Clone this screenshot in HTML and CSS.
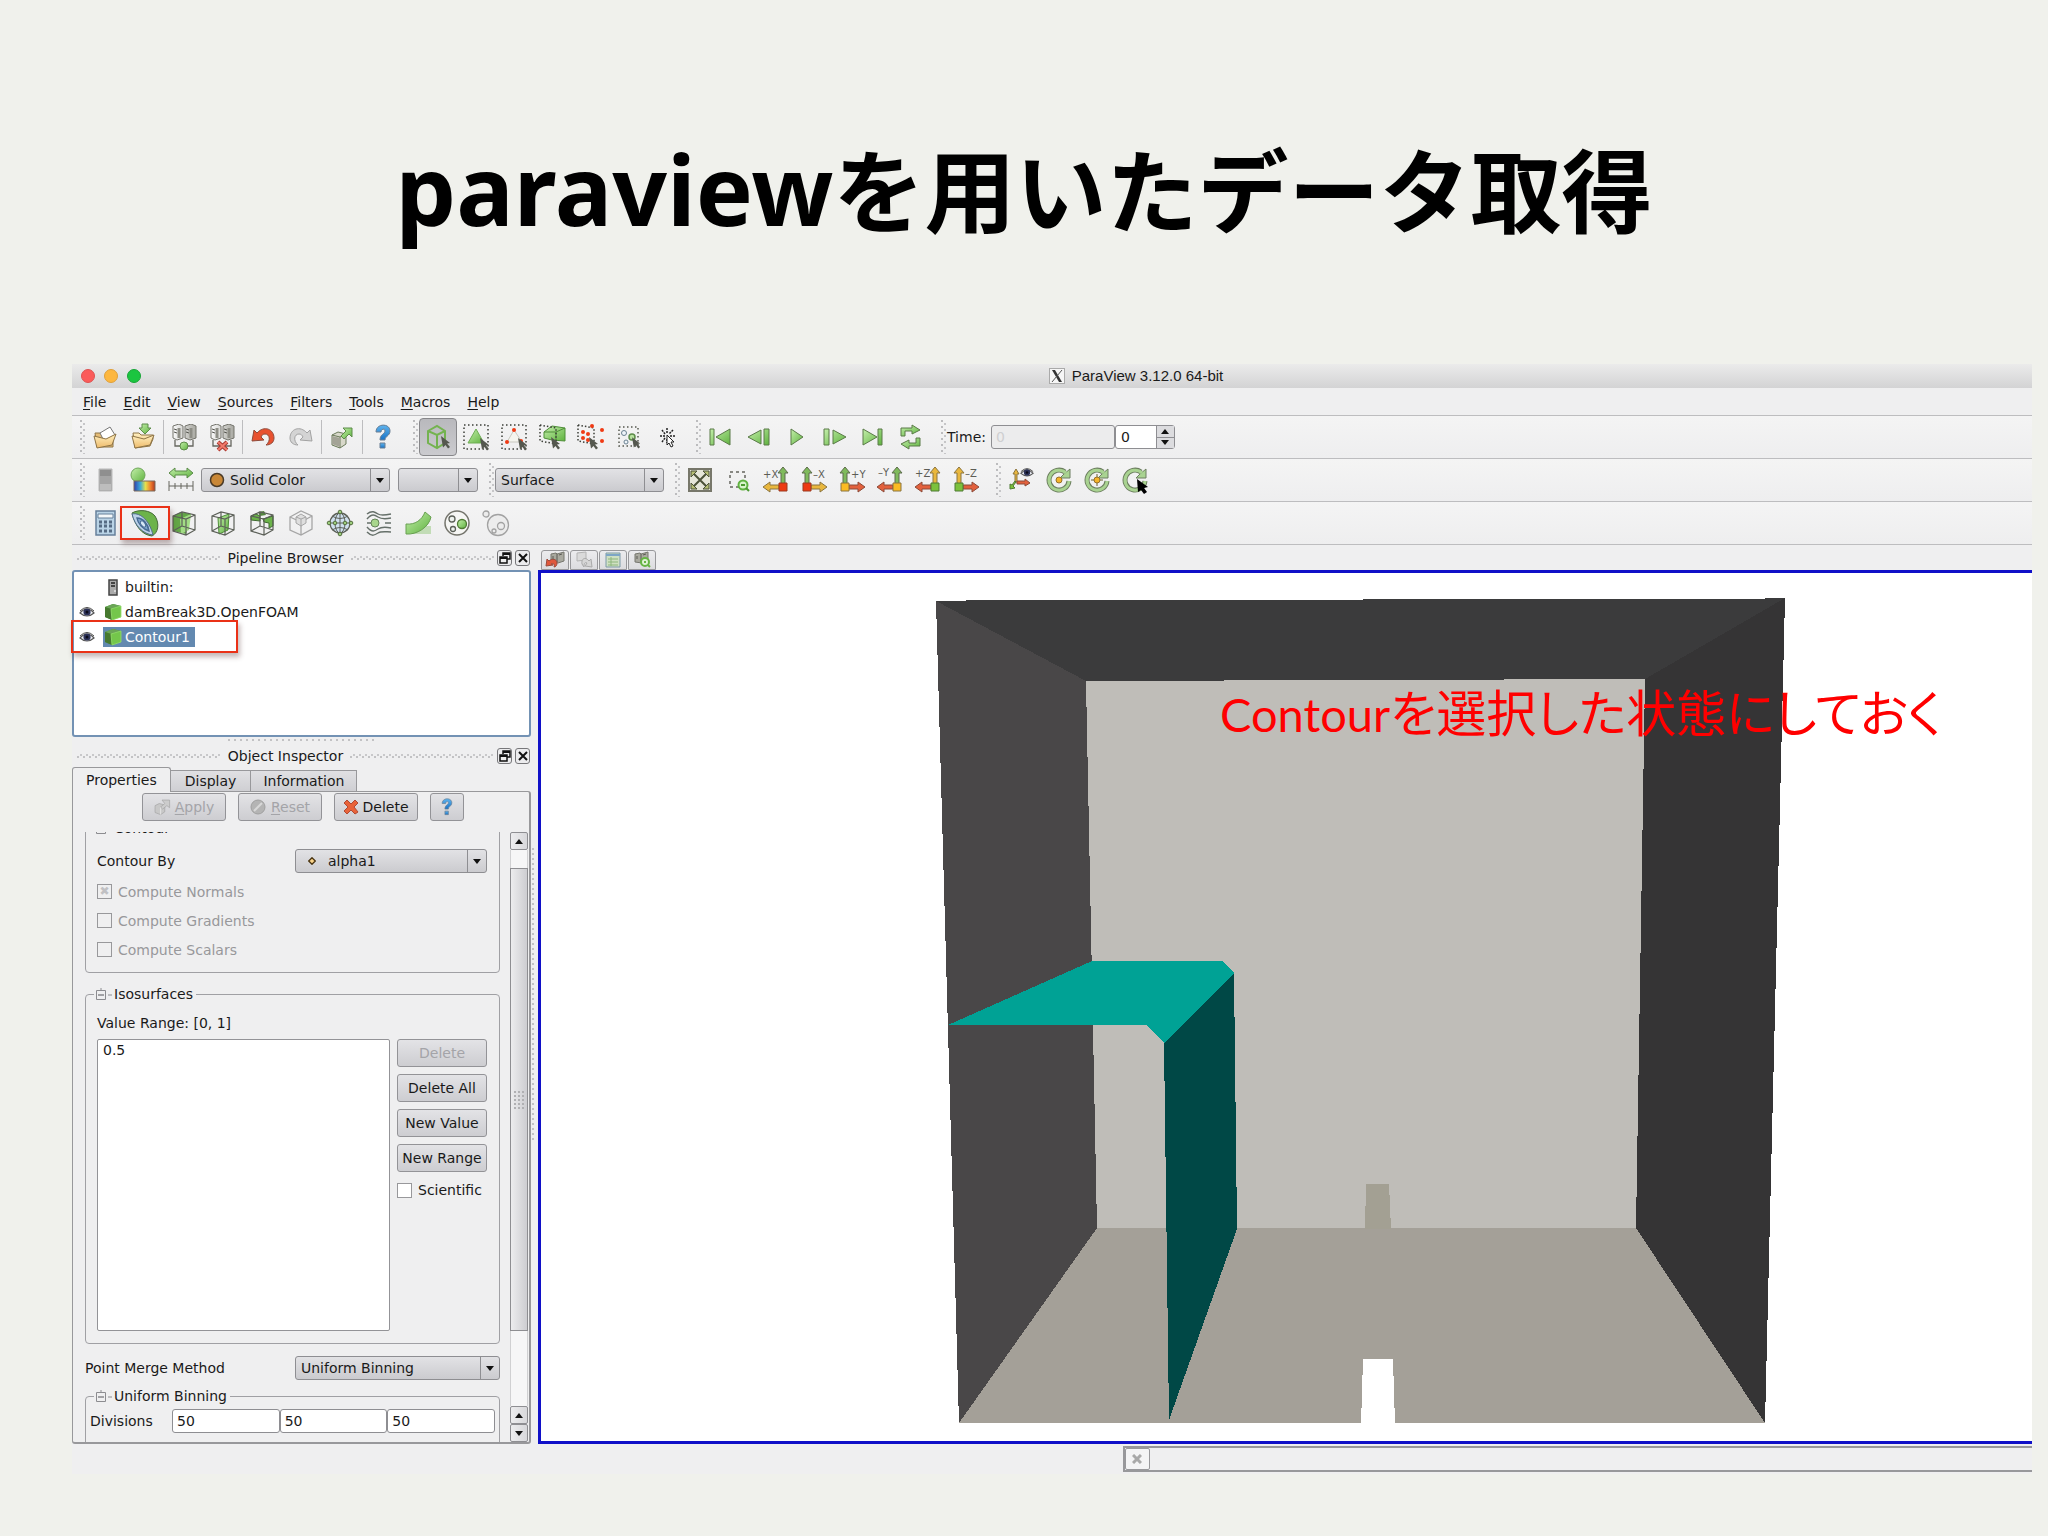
FILE: index.html
```html
<!DOCTYPE html>
<html lang="ja">

<head>
    <meta charset="UTF-8">
    <meta name="viewport" content="width=device-width, initial-scale=1.0">
    <title>paraviewを用いたデータ取得</title>
    <link rel="stylesheet" href="styles.css">
</head>

<body>
    <!-- Shared gradients and icon parts -->
    <svg class="defs" width="0" height="0" aria-hidden="true">
        <defs>
            <linearGradient id="green" x1="0" y1="0" x2="1" y2="1">
                <stop offset="0" stop-color="#c4efab" />
                <stop offset="1" stop-color="#5fb23f" />
            </linearGradient>
            <linearGradient id="folder" x1="0" y1="0" x2="0" y2="1">
                <stop offset="0" stop-color="#fff0c0" />
                <stop offset="1" stop-color="#eebb6c" />
            </linearGradient>
            <linearGradient id="steel" x1="0" y1="0" x2="1" y2="0">
                <stop offset="0" stop-color="#fafafa" />
                <stop offset="1" stop-color="#a9a9a2" />
            </linearGradient>
            <linearGradient id="rainbow" x1="0" y1="0" x2="1" y2="0">
                <stop offset="0" stop-color="#2f3fae" />
                <stop offset="0.3" stop-color="#3aa9d8" />
                <stop offset="0.55" stop-color="#e8e04a" />
                <stop offset="0.8" stop-color="#ee7a2c" />
                <stop offset="1" stop-color="#b03a20" />
            </linearGradient>
            <linearGradient id="blue" x1="0" y1="0" x2="0" y2="1">
                <stop offset="0" stop-color="#5fb4ee" />
                <stop offset="1" stop-color="#1a72c4" />
            </linearGradient>
        </defs>
        <symbol id="cursor" viewBox="0 0 10 13">
            <path d="M0 0L9 7L6 7.500L9 11L7 12.500L4.500 9L2 11.500Z" fill="#55584f" />
        </symbol>
        <symbol id="dots" viewBox="0 0 26 26">
            <path d="M1 1H25V25H1Z" fill="none" stroke="#3c3f38" stroke-width="1.500" stroke-dasharray="1.500 2.500" />
        </symbol>
        <symbol id="wirecube" viewBox="0 0 26 26">
            <path d="M2 6L11 2L24 5V20L15 25L2 21ZM2 6L15 9L24 5M15 9V25M11 2V16L2 21M11 16L24 20" fill="none"
                stroke="#5c6058" stroke-width="1.200" />
        </symbol>
        <symbol id="cubeblock" viewBox="0 0 18 18">
            <path d="M1 4L9 1L17 3V14L8 17L1 14Z" fill="#4f9a3b" />
            <path d="M1 4L9 1L17 3L7 6Z" fill="#6aa457" />
            <path d="M1 4L7 6L8 17L1 14Z" fill="#46792f" />
            <path d="M7 6L17 3V14L8 17Z" fill="#74c64b" stroke="#93dd6b" stroke-width="0.800" />
        </symbol>
        <symbol id="eye" viewBox="0 0 16 12">
            <path d="M1 7Q8 -1 15 7Q8 13 1 7Z" fill="#eef0f6" stroke="#555" stroke-width="1.200" />
            <circle cx="8" cy="6" r="3.600" fill="#2b3158" />
            <circle cx="8" cy="6" r="1.500" fill="#0a0a18" />
            <path d="M1 5Q8 -2 15 5" fill="none" stroke="#444" />
        </symbol>
        <symbol id="servers" viewBox="0 0 26 26">
            <path d="M2 2L8 0L12 2V14L6 16L2 14ZM14 2L20 0L25 2V14L19 16L14 14Z" fill="url(#steel)" stroke="#74746c" />
            <path d="M3 5L6 6M3 8L6 9M15 5L18 6M15 8L18 9" stroke="#55554f" />
            <path d="M8 4V14M20 4V14" stroke="#8e8e86" stroke-width="3" />
            <path d="M4 16V22H22V16" fill="none" stroke="#66665f" stroke-width="1.300" />
        </symbol>
        <symbol id="question" viewBox="0 0 18 26">
            <path d="M2 8C2 -1 16 -1 16 7C16 12 11 12 11 16H6C6 10 11 10 11 7C11 4 7 5 7 8Z" fill="url(#blue)"
                stroke="#6a7f94" />
            <path d="M6 19H11V24H6Z" fill="url(#blue)" stroke="#6a7f94" />
        </symbol>
        <symbol id="float" viewBox="0 0 12 12">
            <path d="M4 4V1H11V7H8" fill="none" stroke="#111" stroke-width="1.500" />
            <path d="M4 2H11" stroke="#111" stroke-width="2" />
            <path d="M1 5H8V11H1Z" fill="#eee" stroke="#111" stroke-width="1.500" />
            <path d="M1 6H8" stroke="#111" stroke-width="2" />
        </symbol>
        <symbol id="close" viewBox="0 0 12 12">
            <path d="M2 2L10 10M10 2L2 10" stroke="#111" stroke-width="2" />
        </symbol>
        <symbol id="rotate" viewBox="0 0 26 26">
            <path d="M23 14A10 10 0 1 1 19 5" fill="none" stroke="#6d7f60" stroke-width="5" />
            <path d="M24 2V11H14L18 7Z" fill="#a9d391" stroke="#6d7f60" />
            <path d="M23 14A10 10 0 1 1 20 6" fill="none" stroke="#a9d391" stroke-width="3" />
        </symbol>
        <symbol id="collapse" viewBox="0 0 18 14">
            <path d="M2.500 3.500H11.500V12.500H2.500ZM7 1V3M14 8H18" fill="none" stroke="#8c8c90" />
            <path d="M4 8H10" stroke="#55555a" />
        </symbol>
        <symbol id="chip" viewBox="0 0 18 18">
            <path d="M3 3L8 2L9 3L16 1V10L10 12L3 11Z" fill="#a9a99f" stroke="#77776f" />
            <path d="M9 3V11M11 4L14 3M5 5V8" stroke="#5b5b55" />
        </symbol>
    </svg>

    <h1><span>paraview</span>を用いたデータ取得</h1>

    <main class="window">
        <header class="titlebar">
            <div class="lights">
                <span class="light red"></span>
                <span class="light amber"></span>
                <span class="light green"></span>
            </div>
            <div class="window-title">
                <svg width="16" height="16" viewBox="0 0 16 16">
                    <rect x="0.500" y="0.500" width="15" height="15" fill="#f6f6f6" stroke="#aaa" />
                    <path d="M3 2H6L13 14H10Z" fill="#333" />
                    <path d="M13 2L3 14" stroke="#555" />
                </svg>
                <span>ParaView 3.12.0 64-bit</span>
            </div>
        </header>

        <nav class="menubar">
            <a href="#"><u>F</u>ile</a>
            <a href="#"><u>E</u>dit</a>
            <a href="#"><u>V</u>iew</a>
            <a href="#"><u>S</u>ources</a>
            <a href="#"><u>F</u>ilters</a>
            <a href="#"><u>T</u>ools</a>
            <a href="#"><u>M</u>acros</a>
            <a href="#"><u>H</u>elp</a>
        </nav>

        <!-- Main controls, selection, playback -->
        <div class="toolbar-row">
            <div class="toolbar">
                <button class="tool" aria-label="Open"><svg viewBox="0 0 26 26">
                        <path d="M3 9H9L11 11H21V23H5Z" fill="#e6bd77" stroke="#8e7446" />
                        <path d="M8 9L18 3L23 11L12 17Z" fill="#fff" stroke="#777" />
                        <path d="M2 12L14 15L24 10L20 21L5 24Z" fill="url(#folder)" stroke="#8e7446" />
                    </svg></button>
                <button class="tool" aria-label="Save"><svg viewBox="0 0 26 26">
                        <path d="M3 9H9L11 11H23V15L20 22L5 24Z" fill="url(#folder)" stroke="#8e7446" />
                        <path d="M2 12L14 15L24 11L20 21L5 24Z" fill="url(#folder)" stroke="#8e7446" />
                        <path d="M12 0H18V4H21L15 10L9 4H12Z" fill="url(#green)" stroke="#5d8c4a" />
                    </svg></button>
                <span class="separator"></span>
                <button class="tool" aria-label="Connect"><svg viewBox="0 0 26 26">
                        <use href="#servers" />
                        <circle cx="13" cy="22" r="4" fill="url(#green)" stroke="#5d8c4a" />
                    </svg></button>
                <button class="tool" aria-label="Disconnect"><svg viewBox="0 0 26 26">
                        <use href="#servers" />
                        <path d="M9 18L18 26M18 18L9 26" stroke="#a83a32" stroke-width="4" />
                        <path d="M9 18L18 26M18 18L9 26" stroke="#f07a6c" stroke-width="2" />
                    </svg></button>
                <span class="separator"></span>
                <button class="tool" aria-label="Undo"><svg viewBox="0 0 26 26">
                        <path d="M2 17L4 6L7 9C14 1 24 5 24 14C24 18 21 21 16 21C21 17 20 10 15 10C13 10 12 11 11 13L14 16Z"
                            fill="#e8512f" stroke="#8f4a3a" />
                    </svg></button>
                <button class="tool" aria-label="Redo" disabled><svg viewBox="0 0 26 26">
                        <path d="M24 17L22 6L19 9C12 1 2 5 2 14C2 18 5 21 10 21C5 17 6 10 11 10C13 10 14 11 15 13L12 16Z"
                            fill="#d4d4d4" stroke="#a2a2a2" />
                    </svg></button>
                <span class="separator"></span>
                <button class="tool" aria-label="Find data"><svg viewBox="0 0 26 26">
                        <path d="M3 11L9 8L17 10V20L11 24L3 21Z" fill="#d8d8ca" stroke="#6a7a5a" />
                        <path d="M3 11L11 13L17 10M11 13V24" fill="none" stroke="#6a7a5a" />
                        <path d="M3 12L11 14V23L3 20Z" fill="#a3a396" />
                        <path d="M14 4H23V13L20 10L15 15L12 12L17 7Z" fill="url(#green)" stroke="#5d8c4a" />
                    </svg></button>
                <span class="separator"></span>
                <button class="tool" aria-label="Help"><svg viewBox="0 0 26 26">
                        <use href="#question" x="4" width="18" height="26" />
                    </svg></button>
            </div>

            <div class="toolbar">
                <button class="tool active" aria-label="Interact"><svg viewBox="0 0 26 26">
                        <path d="M3 7L12 2L20 7V19L12 24L3 19ZM3 7L12 11L20 7M12 11V24" fill="none" stroke="#74b350"
                            stroke-width="2" />
                        <use href="#cursor" x="16" y="12" width="10" height="13" />
                    </svg></button>
                <button class="tool" aria-label="Select cells"><svg viewBox="0 0 26 26">
                        <use href="#dots" />
                        <path d="M13 5L21 19H5Z" fill="url(#green)" stroke="#6fae55" />
                        <use href="#cursor" x="17" y="14" width="10" height="13" />
                    </svg></button>
                <button class="tool" aria-label="Select points"><svg viewBox="0 0 26 26">
                        <use href="#dots" />
                        <path d="M13 6L21 18H6Z" fill="#f4f4ee" stroke="#c8c8c0" />
                        <circle cx="13" cy="6" r="2" fill="#f03a14" />
                        <circle cx="6" cy="18" r="2" fill="#f03a14" />
                        <circle cx="20" cy="17" r="2" fill="#f03a14" />
                        <use href="#cursor" x="17" y="14" width="10" height="13" />
                    </svg></button>
                <button class="tool" aria-label="Select frustum cells"><svg viewBox="0 0 26 26">
                        <path d="M5 8L13 2L26 4V17L13 16L5 14Z" fill="url(#green)" stroke="#4f8f38" />
                        <path d="M5 8L17 8L26 4M17 8V17" fill="none" stroke="#4f8f38" />
                        <path d="M1 1L17 4V20L1 17Z" fill="none" stroke="#3c3f38" stroke-width="1.500"
                            stroke-dasharray="1.500 2" />
                        <use href="#cursor" x="12" y="13" width="10" height="13" />
                    </svg></button>
                <button class="tool" aria-label="Select frustum points"><svg viewBox="0 0 26 26">
                        <path d="M1 1L17 4V20L1 17Z" fill="none" stroke="#3c3f38" stroke-width="1.500"
                            stroke-dasharray="1.500 2" />
                        <g fill="#f03a14">
                            <circle cx="6" cy="8" r="2" />
                            <circle cx="11" cy="10" r="2" />
                            <circle cx="6" cy="14" r="2" />
                            <circle cx="11" cy="16" r="2" />
                            <circle cx="15" cy="2" r="2" />
                            <circle cx="25" cy="6" r="2" />
                            <circle cx="25" cy="17" r="2" />
                        </g>
                        <use href="#cursor" x="12" y="13" width="10" height="13" />
                    </svg></button>
                <button class="tool" aria-label="Select block"><svg viewBox="0 0 26 26">
                        <path d="M4 3H23V22H4Z" fill="none" stroke="#55584f" stroke-width="1.500"
                            stroke-dasharray="1.500 2.500" />
                        <circle cx="9" cy="9" r="2.500" fill="#eef4fa" stroke="#6a8090" />
                        <circle cx="11" cy="18" r="2" fill="#eef4fa" stroke="#6a8090" />
                        <circle cx="17" cy="13" r="3" fill="#b8e2a0" stroke="#5d8c4a" stroke-width="1.500" />
                        <use href="#cursor" x="17" y="13" width="9" height="12" />
                    </svg></button>
                <button class="tool" aria-label="Pick"><svg viewBox="-5 0 26 26">
                        <path d="M9 4V9M9 15V19M2 12H7M12 12H17M4 6L7 10M15 6L11 10M4 18L7 14" stroke="#222"
                            stroke-width="1.500" stroke-dasharray="2 1" />
                        <path d="M9 11L16 18L13 18L15 22L13 23L11 19L9 21Z" fill="#fff" stroke="#222" />
                    </svg></button>
            </div>

            <div class="toolbar">
                <button class="tool" aria-label="First frame"><svg viewBox="0 0 26 26">
                        <path d="M2 5H6V21H2ZM22 5V21L8 13Z" fill="url(#green)" stroke="#5a7a48" />
                    </svg></button>
                <button class="tool" aria-label="Previous frame"><svg viewBox="0 0 26 26">
                        <path d="M18 5H23V21H18ZM15 6V20L2 13Z" fill="url(#green)" stroke="#5a7a48" />
                    </svg></button>
                <button class="tool" aria-label="Play"><svg viewBox="0 0 26 26">
                        <path d="M7 5V21L19 13Z" fill="url(#green)" stroke="#5a7a48" />
                    </svg></button>
                <button class="tool" aria-label="Next frame"><svg viewBox="0 0 26 26">
                        <path d="M2 5H7V21H2ZM11 6V20L24 13Z" fill="url(#green)" stroke="#5a7a48" />
                    </svg></button>
                <button class="tool" aria-label="Last frame"><svg viewBox="0 0 26 26">
                        <path d="M18 5H22V21H18ZM3 5V21L17 13Z" fill="url(#green)" stroke="#5a7a48" />
                    </svg></button>
                <button class="tool" aria-label="Loop"><svg viewBox="0 0 26 26">
                        <path d="M3 12V4H14V1L22 6L14 10V7H7V12Z" fill="url(#green)" stroke="#5a7a48" />
                        <path d="M22 14V22H11V25L3 20L11 16V19H18V14Z" fill="url(#green)" stroke="#5a7a48" />
                    </svg></button>
            </div>

            <div class="toolbar">
                <label for="time">Time:</label>
                <input class="text-input time-value" id="time" type="text" value="0" disabled>
                <div class="spinbox">
                    <input type="text" value="0" aria-label="Time step">
                    <div class="spin-buttons">
                        <button aria-label="Step up"><i class="up"></i></button>
                        <button aria-label="Step down"><i class="down"></i></button>
                    </div>
                </div>
            </div>
        </div>

        <!-- Colouring, representation, camera -->
        <div class="toolbar-row">
            <div class="toolbar">
                <button class="tool" aria-label="Color legend" disabled><svg viewBox="0 0 26 26">
                        <path d="M7 2H20V24H7Z" fill="#a5a5a5" stroke="#b9b9b9" />
                        <path d="M8 3H19V9H8Z" fill="#8f8f8f" />
                        <path d="M8 17H19V23H8Z" fill="#bdbdbd" />
                    </svg></button>
                <button class="tool" aria-label="Edit color map"><svg viewBox="0 0 26 26">
                        <circle cx="8" cy="8" r="7" fill="url(#green)" stroke="#6fa65a" />
                        <path d="M4 14H25V24H4Z" fill="url(#rainbow)" stroke="#7a6a5a" />
                    </svg></button>
                <button class="tool" aria-label="Rescale range"><svg viewBox="0 0 26 26">
                        <path d="M1 6L7 1V4H19V1L25 6L19 11V8H7V11Z" fill="url(#green)" stroke="#5a8c48" />
                        <path d="M1 14V24M25 14V24M1 19H25M7 16V22M13 16V22M19 16V22" stroke="#66665f" fill="none" />
                    </svg></button>
                <div class="combo combo-color">
                    <svg width="16" height="16" viewBox="0 0 16 16">
                        <circle cx="8" cy="8" r="6.500" fill="#c98736" stroke="#4a3a26" stroke-width="1.500" />
                    </svg>
                    <select aria-label="Color by">
                        <option>Solid Color</option>
                    </select>
                    <span class="arrow"></span>
                </div>
                <div class="combo combo-component">
                    <select aria-label="Component" disabled>
                        <option></option>
                    </select>
                    <span class="arrow"></span>
                </div>
            </div>

            <div class="toolbar">
                <div class="combo combo-representation">
                    <select aria-label="Representation">
                        <option>Surface</option>
                    </select>
                    <span class="arrow"></span>
                </div>
            </div>

            <div class="toolbar">
                <button class="tool" aria-label="Reset camera"><svg viewBox="0 0 26 26">
                        <path d="M2 2H24V24H2Z" fill="#e6e6d8" stroke="#77776a" stroke-width="2" />
                        <path d="M7 7L19 19M19 7L7 19" stroke="#4c5238" stroke-width="2" />
                        <path d="M4 4H10L4 10ZM22 4V10L16 4ZM4 22V16L10 22ZM22 22H16L22 16Z" fill="#b5bd72"
                            stroke="#4c5238" />
                    </svg></button>
                <button class="tool" aria-label="Zoom to box"><svg viewBox="0 0 26 26">
                        <path d="M5 5H20V20H5Z" fill="none" stroke="#66665f" stroke-width="1.500" stroke-dasharray="3 3" />
                        <circle cx="18" cy="18" r="4.500" fill="#d8f3ca" stroke="#5fb23f" stroke-width="2" />
                        <path d="M16 18H20M21 21L24 24" stroke="#4b9a30" stroke-width="2" />
                    </svg></button>
                <button class="tool" aria-label="View +X"><svg viewBox="0 0 26 26">
                        <text class="axis" x="0" y="11">+X</text>
                        <path d="M18 17V6H15L20 0L25 6H22V17Z" fill="#7fba5c" stroke="#5d6b4c" />
                        <path d="M16 18V22H7V25L0 20L7 15V18Z" fill="#e9b73d" stroke="#8a7440" />
                        <path d="M16 16H24V24H16Z" fill="#ee3a12" stroke="#9a3a20" />
                    </svg></button>
                <button class="tool" aria-label="View -X"><svg viewBox="0 0 26 26">
                        <text class="axis" x="12" y="11">–X</text>
                        <path d="M4 17V6H1L6 0L11 6H8V17Z" fill="#7fba5c" stroke="#5d6b4c" />
                        <path d="M10 18V22H19V25L26 20L19 15V18Z" fill="#e9b73d" stroke="#8a7440" />
                        <path d="M2 16H10V24H2Z" fill="#ee3a12" stroke="#9a3a20" />
                    </svg></button>
                <button class="tool" aria-label="View +Y"><svg viewBox="0 0 26 26">
                        <text class="axis" x="12" y="11">+Y</text>
                        <path d="M4 17V6H1L6 0L11 6H8V17Z" fill="#7fba5c" stroke="#5d6b4c" />
                        <path d="M10 18V22H19V25L26 20L19 15V18Z" fill="#e2603c" stroke="#8c4a38" />
                        <path d="M2 16H10V24H2Z" fill="#fbbb22" stroke="#8a7440" />
                    </svg></button>
                <button class="tool" aria-label="View -Y"><svg viewBox="0 0 26 26">
                        <text class="axis" x="1" y="9">–Y</text>
                        <path d="M18 17V6H15L20 0L25 6H22V17Z" fill="#7fba5c" stroke="#5d6b4c" />
                        <path d="M16 18V22H7V25L0 20L7 15V18Z" fill="#e2603c" stroke="#8c4a38" />
                        <path d="M16 16H24V24H16Z" fill="#fbbb22" stroke="#8a7440" />
                    </svg></button>
                <button class="tool" aria-label="View +Z"><svg viewBox="0 0 26 26">
                        <text class="axis" x="0" y="10">+Z</text>
                        <path d="M18 17V6H15L20 0L25 6H22V17Z" fill="#e9b73d" stroke="#8a7440" />
                        <path d="M16 18V22H7V25L0 20L7 15V18Z" fill="#e2603c" stroke="#8c4a38" />
                        <path d="M16 16H24V24H16Z" fill="#7cc13c" stroke="#4f7a34" />
                    </svg></button>
                <button class="tool" aria-label="View -Z"><svg viewBox="0 0 26 26">
                        <text class="axis" x="12" y="10">–Z</text>
                        <path d="M4 17V6H1L6 0L11 6H8V17Z" fill="#e9b73d" stroke="#8a7440" />
                        <path d="M10 18V22H19V25L26 20L19 15V18Z" fill="#e2603c" stroke="#8c4a38" />
                        <path d="M2 16H10V24H2Z" fill="#7cc13c" stroke="#4f7a34" />
                    </svg></button>
            </div>

            <div class="toolbar">
                <button class="tool" aria-label="Show orientation axes"><svg viewBox="0 0 26 26">
                        <path d="M7 15V7H5L8 2L11 7H9V15Z" fill="#e9b73d" stroke="#8a7440" />
                        <path d="M9 14H17V12L22 16L17 19V17H9Z" fill="#e2603c" stroke="#8c4a38" />
                        <path d="M8 15L5 19L7 21L2 22L2 17L4 18L7 14Z" fill="#7cc13c" stroke="#4f7a34" />
                        <use href="#eye" x="12" y="0" width="14" height="11" />
                    </svg></button>
                <button class="tool" aria-label="Show center"><svg viewBox="0 0 26 26">
                        <use href="#rotate" />
                        <circle cx="13" cy="13" r="3" fill="#f5b428" stroke="#96702c" />
                    </svg></button>
                <button class="tool" aria-label="Reset center"><svg viewBox="0 0 26 26">
                        <use href="#rotate" />
                        <path d="M13 7V19M7 13H19" stroke="#6b6030" />
                        <circle cx="13" cy="13" r="3" fill="#f5b428" stroke="#96702c" />
                    </svg></button>
                <button class="tool" aria-label="Pick center"><svg viewBox="0 0 26 26">
                        <use href="#rotate" />
                        <path d="M15 12L26 20L22 21L25 25L22 27L19 23L16 25Z" fill="#000" />
                    </svg></button>
            </div>
        </div>

        <!-- Common filters -->
        <div class="toolbar-row">
            <div class="toolbar filters">
                <button class="tool" aria-label="Calculator"><svg viewBox="0 0 26 26">
                        <path d="M3 1H22V25H3Z" fill="#b9d3e6" stroke="#67809a" stroke-width="1.500" />
                        <path d="M5 4H20V8H5Z" fill="#f4f8fa" stroke="#67809a" />
                        <path d="M6 12H19M6 16H19M6 21H19" stroke="#566c84" stroke-width="3" stroke-dasharray="3 2" />
                    </svg></button>
                <button class="tool marked" aria-label="Contour"><svg viewBox="0 0 26 26">
                        <path d="M0 3C7 -1 18 0 23 6C28 14 26 23 20 26C10 25 3 16 0 3Z" fill="#6cb34a" stroke="#476b3a" />
                        <path d="M0 4C9 2 18 12 21 25C11 24 3 16 0 4Z" fill="#bcd2e8" stroke="#4f6c8c" />
                        <path d="M5 8C11 8 16 14 17 21C11 19 6 14 5 8Z" fill="#7fa6cc" stroke="#476a94" stroke-width="1.500" />
                        <ellipse cx="11" cy="14" rx="2" ry="3.500" transform="rotate(-35 11 14)" fill="#d6e8f6"
                            stroke="#476a94" />
                    </svg></button>
                <button class="tool" aria-label="Clip"><svg viewBox="0 0 26 26">
                        <path d="M2 6L10 2L20 4L15 24L2 21Z" fill="#63a647" />
                        <path d="M9 9L20 4L18 20L10 24Z" fill="#a2dc85" />
                        <use href="#wirecube" />
                    </svg></button>
                <button class="tool" aria-label="Slice"><svg viewBox="0 0 26 26">
                        <path d="M8 8L19 4L18 20L9 24Z" fill="url(#green)" stroke="#4f8f38" />
                        <use href="#wirecube" />
                    </svg></button>
                <button class="tool" aria-label="Threshold"><svg viewBox="0 0 26 26">
                        <path d="M2 6L7 4L11 6V11L2 10ZM14 9L24 6V16L20 18V13L15 12Z" fill="#6cb34a" stroke="#3f6b30" />
                        <path d="M9 2L15 1L17 5L11 6Z" fill="#55883f" />
                        <use href="#wirecube" />
                    </svg></button>
                <button class="tool" aria-label="Extract subset" disabled><svg viewBox="0 0 26 26">
                        <path d="M2 7L13 1L24 6V19L13 25L2 20ZM2 7L13 12L24 6M13 12V25" fill="none" stroke="#a6a6a6"
                            stroke-width="1.300" />
                        <path d="M8 7L13 4L18 7V13L13 16L8 13Z" fill="#dedede" stroke="#a6a6a6" />
                        <path d="M8 7L13 9L18 7M13 9V16" fill="none" stroke="#a6a6a6" />
                    </svg></button>
                <button class="tool" aria-label="Glyph"><svg viewBox="0 0 26 26">
                        <circle cx="13" cy="13" r="10" fill="#cfe0ee" stroke="#5c6058" stroke-width="1.300" />
                        <path d="M13 1V25M1 13H25M5 6Q13 11 21 6M5 20Q13 15 21 20" fill="none" stroke="#5c6058" />
                        <ellipse cx="13" cy="13" rx="5" ry="10" fill="none" stroke="#5c6058" />
                        <g fill="#9ccc7c" stroke="#55703f">
                            <circle cx="13" cy="2" r="1.800" />
                            <circle cx="13" cy="24" r="1.800" />
                            <circle cx="2" cy="13" r="1.800" />
                            <circle cx="24" cy="13" r="1.800" />
                            <circle cx="8" cy="13" r="1.800" />
                            <circle cx="18" cy="13" r="1.800" />
                        </g>
                    </svg></button>
                <button class="tool" aria-label="Stream tracer"><svg viewBox="0 0 26 26">
                        <path d="M1 4C6 0 9 2 12 4S20 5 25 4M1 9C6 3 9 5 12 7S20 9 25 8M1 17C6 23 9 21 12 19S20 17 25 18M1 22C6 27 9 25 12 23S20 22 25 22M19 13H25M1 13H5"
                            fill="none" stroke="#66706a" stroke-width="1.500" />
                        <circle cx="9" cy="13" r="4" fill="#a8d68c" stroke="#66855a" />
                    </svg></button>
                <button class="tool" aria-label="Warp"><svg viewBox="0 0 26 26">
                        <path d="M8 16H26V24H8Z" fill="#c2dcb6" />
                        <path d="M1 14C10 15 17 10 20 2L26 7C24 17 12 25 1 24Z" fill="url(#green)" stroke="#68a050" />
                    </svg></button>
                <button class="tool" aria-label="Group datasets"><svg viewBox="0 0 26 26">
                        <circle cx="13" cy="13" r="12" fill="#f6f6f4" stroke="#74746c" stroke-width="1.500" />
                        <circle cx="8" cy="9" r="3" fill="#eef2ee" stroke="#5c6058" stroke-width="1.300" />
                        <circle cx="9" cy="19" r="2.500" fill="#eef2ee" stroke="#5c6058" stroke-width="1.300" />
                        <circle cx="18" cy="14" r="4.500" fill="url(#green)" stroke="#4f7a34" stroke-width="1.300" />
                    </svg></button>
                <button class="tool" aria-label="Extract level" disabled><svg viewBox="0 0 26 26">
                        <g fill="#ececec" stroke="#a2a2a2" stroke-width="1.300">
                            <circle cx="15" cy="15" r="10.500" />
                            <circle cx="3" cy="4" r="3" />
                            <circle cx="18" cy="16" r="3.500" />
                            <circle cx="11" cy="21" r="2" />
                        </g>
                    </svg></button>
            </div>
        </div>

        <div class="workspace">
            <aside class="docks">
                <section class="dock">
                    <header class="dock-title">
                        <span class="grip"></span>
                        <h2>Pipeline Browser</h2>
                        <span class="grip"></span>
                        <button aria-label="Float"><svg width="12" height="12"><use href="#float" /></svg></button>
                        <button aria-label="Close"><svg width="12" height="12"><use href="#close" /></svg></button>
                    </header>
                    <ul class="pipeline">
                        <li>
                            <span class="visibility"></span>
                            <span class="node">
                                <svg width="18" height="18" viewBox="0 0 18 18">
                                    <path d="M5 2H13V17H5Z" fill="#aaa" stroke="#444" stroke-width="1.500" />
                                    <path d="M7 5H11M7 8H11" stroke="#222" stroke-width="1.500" />
                                    <path d="M10 13H12" stroke="#fff" />
                                </svg>
                                builtin:
                            </span>
                        </li>
                        <li>
                            <svg class="visibility" height="12"><use href="#eye" /></svg>
                            <span class="node">
                                <svg width="18" height="18"><use href="#cubeblock" /></svg>
                                damBreak3D.OpenFOAM
                            </span>
                        </li>
                        <li class="marked">
                            <svg class="visibility" height="12"><use href="#eye" /></svg>
                            <span class="node selected">
                                <svg width="18" height="18"><use href="#cubeblock" /></svg>
                                Contour1
                            </span>
                        </li>
                    </ul>
                </section>

                <div class="splitter"></div>

                <section class="dock inspector">
                    <header class="dock-title">
                        <span class="grip"></span>
                        <h2>Object Inspector</h2>
                        <span class="grip"></span>
                        <button aria-label="Float"><svg width="12" height="12"><use href="#float" /></svg></button>
                        <button aria-label="Close"><svg width="12" height="12"><use href="#close" /></svg></button>
                    </header>
                    <div class="tabs" role="tablist">
                        <button role="tab" aria-selected="true">Properties</button>
                        <button role="tab" aria-selected="false">Display</button>
                        <button role="tab" aria-selected="false">Information</button>
                    </div>
                    <div class="pane">
                        <div class="actions">
                            <button class="push" disabled>
                                <svg width="18" height="18" viewBox="0 0 26 26">
                                    <path d="M3 11L9 8L17 10V20L11 24L3 21Z" fill="#c8c8c8" stroke="#a4a4a4" />
                                    <path d="M11 13V24" stroke="#eee" />
                                    <path d="M13 3H24V14L20 11L14 16L11 13L17 8Z" fill="#ccc" stroke="#a4a4a4" />
                                </svg>
                                <span><u>A</u>pply</span>
                            </button>
                            <button class="push" disabled>
                                <svg width="18" height="18" viewBox="0 0 18 18">
                                    <circle cx="9" cy="9" r="7" fill="#b4b4b4" stroke="#a0a0a0" />
                                    <path d="M5 13L13 5" stroke="#d8d8d8" stroke-width="2" />
                                </svg>
                                <span><u>R</u>eset</span>
                            </button>
                            <button class="push">
                                <svg width="16" height="18" viewBox="0 0 16 18">
                                    <path d="M4 2L8 6L12 2L15 5L11 9L15 14L12 16L8 12L4 16L1 13L5 9L1 5Z" fill="#e8633a"
                                        stroke="#b04a34" />
                                </svg>
                                <span>Delete</span>
                            </button>
                            <button class="push help" aria-label="Help"><svg width="14" height="18"><use
                                        href="#question" /></svg></button>
                        </div>

                        <div class="scroll-area">
                            <div class="properties">
                                <fieldset>
                                    <legend><svg width="18" height="14"><use href="#collapse" /></svg>Contour</legend>
                                    <div class="field">
                                        <label for="contour-by">Contour By</label>
                                        <div class="combo">
                                            <svg class="point-icon" width="8" height="8" viewBox="0 0 8 8">
                                                <path d="M4 0.700L7.300 4L4 7.300L0.700 4Z" fill="#fbd58a" stroke="#4a3410"
                                                    stroke-width="1.300" />
                                            </svg>
                                            <select id="contour-by">
                                                <option>alpha1</option>
                                            </select>
                                            <span class="arrow"></span>
                                        </div>
                                    </div>
                                    <label class="check"><input type="checkbox" checked disabled>Compute Normals</label>
                                    <label class="check"><input type="checkbox" disabled>Compute Gradients</label>
                                    <label class="check"><input type="checkbox" disabled>Compute Scalars</label>
                                </fieldset>

                                <fieldset class="isosurfaces">
                                    <legend><svg width="18" height="14"><use href="#collapse" /></svg>Isosurfaces</legend>
                                    <p>Value Range: [0, 1]</p>
                                    <div class="values">
                                        <ul class="value-list">
                                            <li>0.5</li>
                                        </ul>
                                        <div class="value-buttons">
                                            <button class="push" disabled>Delete</button>
                                            <button class="push">Delete All</button>
                                            <button class="push">New Value</button>
                                            <button class="push">New Range</button>
                                            <label class="check"><input type="checkbox">Scientific</label>
                                        </div>
                                    </div>
                                </fieldset>

                                <div class="field merge">
                                    <label for="merge">Point Merge Method</label>
                                    <div class="combo">
                                        <select id="merge">
                                            <option>Uniform Binning</option>
                                        </select>
                                        <span class="arrow"></span>
                                    </div>
                                </div>

                                <fieldset class="binning">
                                    <legend><svg width="18" height="14"><use href="#collapse" /></svg>Uniform Binning</legend>
                                    <div class="divisions">
                                        <label for="div-x">Divisions</label>
                                        <input class="text-input" id="div-x" type="text" value="50">
                                        <input class="text-input" type="text" value="50" aria-label="Divisions Y">
                                        <input class="text-input" type="text" value="50" aria-label="Divisions Z">
                                    </div>
                                </fieldset>
                            </div>

                            <div class="scrollbar">
                                <button aria-label="Scroll up"><i class="up"></i></button>
                                <div class="track">
                                    <div class="thumb"></div>
                                </div>
                                <button aria-label="Scroll up"><i class="up"></i></button>
                                <button aria-label="Scroll down"><i class="down"></i></button>
                            </div>
                        </div>
                    </div>
                </section>
            </aside>

            <div class="v-splitter"></div>

            <section class="viewer">
                <div class="view-tools">
                    <button aria-label="Undo camera"><svg width="20" height="18" viewBox="0 0 20 18">
                            <use href="#chip" x="3" width="18" height="18" />
                            <path d="M1 15L2 8L4 10C7 7 12 8 12 12C12 14 11 16 9 16C10 13 8 12 6 13L8 14Z"
                                fill="#e0583c" stroke="#9a4a3c" />
                        </svg></button>
                    <button aria-label="Redo camera" disabled><svg width="20" height="18" viewBox="0 0 20 18">
                            <path d="M3 2L12 1V9L3 10Z" fill="#dadada" stroke="#b4b4b4" />
                            <path d="M18 16L17 8L15 10C11 5 7 8 8 13L10 16C10 12 11 11 13 12L11 15Z" fill="#d6d6d6"
                                stroke="#aaa" />
                        </svg></button>
                    <button aria-label="Camera settings"><svg width="20" height="18" viewBox="0 0 20 18">
                            <path d="M3 2H17V16H3Z" fill="#cfe0c2" stroke="#7c9aa8" />
                            <path d="M3 3H17V5H3Z" fill="#7ea6c6" />
                            <path d="M5 8H15M5 11H15M5 14H15M8 6V15" stroke="#8db67c" />
                        </svg></button>
                    <button aria-label="Adjust camera"><svg width="20" height="18" viewBox="0 0 20 18">
                            <use href="#chip" width="18" height="18" />
                            <circle cx="13" cy="11" r="4" fill="#dff2d4" stroke="#67b544" stroke-width="2" />
                            <path d="M12 11H14M16 14L18 16" stroke="#67b544" stroke-width="2" />
                        </svg></button>
                </div>
                <div class="render-view">
                    <!-- Open tank seen from the front, with the water surface in teal -->
                    <svg class="scene" viewBox="0 0 1491 868" shape-rendering="crispEdges">
                        <path d="M395 28L455 27L1205 26L1244 25V32L1104 109H545L395 34Z" fill="#3b3b3c" />
                        <path d="M395 28L545 108L556 655L418 850Z" fill="#494748" />
                        <path d="M1244 25L1104 106L1095 655L1224 850Z" fill="#353435" />
                        <path d="M545 108L1104 106L1095 655H556Z" fill="#bfbdb8" />
                        <path d="M556 655H1095L1224 850H418Z" fill="#a4a098" />
                        <path d="M825 611H848L850 656H824Z" fill="#a3a093" />
                        <path d="M822 786H852L854 851H820Z" fill="#fff" />
                        <path d="M407 452L551 388H681L693 400L623 470L605 452Z" fill="#00a295" />
                        <path d="M693 400L696 656L628 847L623 470Z" fill="#004846" />
                    </svg>
                    <p class="note"><span>Contour</span>を選択した状態にしておく</p>
                </div>
            </section>
        </div>

        <footer class="statusbar">
            <div class="progress">
                <button aria-label="Abort" disabled><svg width="10" height="10" viewBox="0 0 10 10">
                        <path d="M1 1L9 9M9 1L1 9" stroke="#a9a9a9" stroke-width="3" />
                    </svg></button>
            </div>
        </footer>
    </main>
</body>

</html>
```
FILE: styles.css
```css
* {
    box-sizing: border-box;
    margin: 0;
    padding: 0;
}

body {
    display: flex;
    flex-direction: column;
    min-height: 100vh;
    background: #f0f1ec;
    color: #1a1a1a;
    font-family: "DejaVu Sans", "Noto Sans CJK JP", sans-serif;
    font-size: 14px;
    line-height: 16px;
}

button,
input,
select {
    font: inherit;
    color: inherit;
}

svg {
    display: block;
    flex: none;
}

.defs {
    position: absolute;
}

ul {
    list-style: none;
}

h1 {
    padding: 125px 0 107px;
    color: #000;
    font-family: "Noto Sans", "Noto Sans CJK JP", sans-serif;
    font-size: 91px;
    font-weight: 700;
    line-height: 132px;
    text-align: center;
}

h1 span {
    font-size: 96px;
    line-height: 1;
}

/* Window frame */
.window {
    flex: 1;
    display: flex;
    flex-direction: column;
    margin: 0 16px 63px 72px;
    background: #efeff0;
}

.titlebar {
    display: grid;
    grid-template-columns: 1fr auto 1fr;
    align-items: center;
    height: 24px;
    padding: 0 9px;
    background: linear-gradient(#ebebeb, #d3d3d4);
}

.lights {
    display: flex;
    gap: 9px;
}

.light {
    width: 14px;
    height: 14px;
    border-radius: 50%;
}

.light.red {
    background: #fb5b5a;
    border: 1px solid #dd5352;
}

.light.amber {
    background: #fdb73f;
    border: 1px solid #dfa03a;
}

.light.green {
    background: #1bc540;
    border: 1px solid #18a536;
}

.window-title {
    display: flex;
    gap: 7px;
    align-items: center;
    padding-left: 168px;
    font-family: "Liberation Sans", sans-serif;
    font-size: 15px;
}

.menubar {
    display: flex;
    gap: 17px;
    align-items: center;
    height: 28px;
    padding: 0 11px;
    border-bottom: 1px solid #bdbdbf;
}

.menubar a {
    color: inherit;
    text-decoration: none;
}

u {
    text-underline-offset: 2px;
}

/* Toolbars */
.toolbar-row {
    display: flex;
    gap: 11px;
    height: 43px;
    padding-left: 8px;
    background: linear-gradient(#f4f4f4, #eeeeef);
    border-bottom: 1px solid #bdbdbf;
}

.toolbar {
    display: flex;
    align-items: center;
}

.toolbar::before {
    content: "";
    width: 6px;
    height: 34px;
    background:
        radial-gradient(circle at 1px 1px, #bcbcbe 1px, transparent 1px) 0 0 / 6px 6px,
        radial-gradient(circle at 4px 4px, #c6c6c8 1px, transparent 1px) 0 0 / 6px 6px;
}

.tool {
    display: flex;
    align-items: center;
    justify-content: center;
    width: 38px;
    height: 38px;
    background: none;
    border: none;
}

.tool svg {
    width: 26px;
    height: 26px;
    overflow: visible;
}

.tool.active {
    background: linear-gradient(#b9b9bd, #cbcbcf);
    border: 1px solid #87878a;
    border-radius: 4px;
}

.tool .axis {
    fill: #5c5c55;
    font-size: 10px;
}

.separator {
    width: 1px;
    height: 34px;
    margin: 0 1px;
    background: #bdbdbf;
}

.filters {
    gap: 1px;
}

/* Red frame round the parts the slide talks about */
.marked {
    position: relative;
}

.marked::after {
    content: "";
    position: absolute;
    inset: 2px -6px;
    border: 2px solid #ea3117;
    box-shadow: 2px 4px 5px rgba(60, 20, 20, 0.3);
}

.combo {
    display: flex;
    align-items: center;
    height: 24px;
    background: linear-gradient(#e2e2e5, #cbcbcf);
    border: 1px solid #8e8e92;
    border-radius: 3px;
}

.combo select {
    flex: 1;
    min-width: 0;
    padding-left: 5px;
    background: none;
    border: none;
    appearance: none;
    outline: none;
}

.combo svg {
    margin-left: 7px;
}

.combo .point-icon {
    margin: 0 7px 0 12px;
}

.arrow {
    display: flex;
    align-items: center;
    justify-content: center;
    align-self: stretch;
    width: 19px;
    border-left: 1px solid #8e8e92;
}

.arrow::before,
.down,
.up {
    content: "";
    border: 4px solid transparent;
    border-top: 5px solid #111;
    border-bottom: none;
}

.up {
    border-top: none;
    border-bottom: 5px solid #111;
}

.combo-color {
    width: 189px;
    margin: 0 8px 0 1px;
}

.combo-component {
    width: 80px;
}

.combo-representation {
    width: 169px;
}

.text-input {
    min-width: 0;
    height: 24px;
    padding: 0 4px;
    background: #fff;
    border: 1px solid #8e8e92;
    border-radius: 3px;
}

.time-value {
    width: 124px;
    margin-left: 5px;
    background: #ececed;
    color: #cfcfd1;
}

.spinbox {
    display: flex;
    width: 60px;
    height: 24px;
    border: 1px solid #8e8e92;
    border-radius: 3px;
    background: #fff;
}

.spinbox input {
    flex: 1;
    min-width: 0;
    padding-left: 5px;
    background: none;
    border: none;
}

.spin-buttons {
    display: flex;
    flex-direction: column;
    width: 18px;
    border-left: 1px solid #8e8e92;
}

.spin-buttons button {
    display: flex;
    flex: 1;
    align-items: center;
    justify-content: center;
    background: #dcdcdf;
    border: none;
}

.spin-buttons button + button {
    border-top: 1px solid #8e8e92;
}

/* Workspace */
.workspace {
    flex: 1;
    display: grid;
    grid-template-columns: 459px 7px 1fr;
}

.docks {
    display: flex;
    flex-direction: column;
    min-width: 0;
}

.dock-title {
    display: flex;
    gap: 3px;
    align-items: center;
    height: 25px;
    padding: 0 1px 0 5px;
}

.dock-title h2 {
    padding: 0 4px;
    font-size: 14px;
    font-weight: 400;
}

.grip {
    flex: 1;
    height: 6px;
    background:
        radial-gradient(circle at 1px 4px, #c2c2c4 1px, transparent 1px) 0 0 / 6px 6px,
        radial-gradient(circle at 4px 2px, #c8c8ca 1px, transparent 1px) 0 0 / 6px 6px;
}

.dock-title button {
    display: flex;
    align-items: center;
    justify-content: center;
    width: 15px;
    height: 16px;
    background: #ececee;
    border: 1px solid #77777a;
    border-radius: 3px;
}

.pipeline {
    height: 167px;
    padding-top: 2px;
    background: #fff;
    border: 2px solid #7392b4;
    border-radius: 3px;
}

.pipeline li {
    display: flex;
    align-items: center;
    gap: 8px;
    height: 25px;
    padding-left: 5px;
}

.visibility {
    width: 16px;
}

.node {
    display: flex;
    gap: 3px;
    align-items: center;
    height: 20px;
    padding: 0 5px 0 1px;
}

.node.selected {
    background: #6389b0;
    color: #fff;
}

.pipeline .marked::after {
    inset: -4px auto -4px -3px;
    width: 163px;
}

.splitter {
    align-self: center;
    width: 150px;
    height: 6px;
    background: radial-gradient(circle at 2px 3px, #c2c2c4 1px, transparent 1px) 0 0 / 6px 6px;
}

.v-splitter {
    align-self: center;
    width: 5px;
    height: 296px;
    background: radial-gradient(circle at 2px 2px, #c2c2c4 1px, transparent 1px) 0 0 / 5px 5px;
}

.inspector {
    flex: 1;
    display: flex;
    flex-direction: column;
}

.tabs {
    display: flex;
    align-items: flex-end;
    height: 24px;
    margin-bottom: -1px;
}

.tabs button {
    height: 22px;
    padding: 0 12px;
    background: linear-gradient(#e0e0e3, #cfcfd3);
    border: 1px solid #98989b;
    border-left: none;
}

.tabs button:nth-child(2) {
    padding: 0 14px;
}

.tabs [aria-selected="true"] {
    z-index: 1;
    height: 25px;
    padding: 0 13px;
    background: #efeff0;
    border-left: 1px solid #98989b;
    border-bottom: none;
    border-radius: 3px 3px 0 0;
}

.pane {
    flex: 1;
    display: flex;
    flex-direction: column;
    padding: 1px 1px 0 12px;
    border: 1px solid #98989b;
    border-width: 1px 2px 2px 1px;
    border-radius: 0 3px 3px 3px;
}

.actions {
    display: flex;
    gap: 12px;
    justify-content: center;
    margin-bottom: 11px;
    padding-right: 8px;
}

.push {
    display: flex;
    gap: 4px;
    align-items: center;
    justify-content: center;
    width: 84px;
    height: 28px;
    background: linear-gradient(#e3e3e6, #cdcdd1);
    border: 1px solid #939397;
    border-radius: 3px;
    white-space: nowrap;
}

.push:disabled {
    color: #a4a4a8;
}

.push.help {
    width: 34px;
}

.scroll-area {
    flex: 1 0 0px;
    display: flex;
    gap: 10px;
    min-height: 600px;
    overflow: hidden;
}

/* Scrolled so that the first legend is just leaving the top */
.properties {
    flex: 1;
    min-width: 0;
    height: 0;
    margin-top: -12px;
}

fieldset {
    min-width: 0;
    margin-bottom: 13px;
    padding: 13px 12px 8px 11px;
    border: 1px solid #a0a0a4;
    border-radius: 4px;
}

legend {
    display: flex;
    gap: 2px;
    align-items: center;
    height: 16px;
    margin-left: -3px;
    padding-right: 3px;
}

.field {
    display: flex;
    align-items: center;
    justify-content: space-between;
}

.field .combo {
    width: 192px;
}

.check {
    display: flex;
    gap: 6px;
    align-items: center;
    height: 29px;
}

fieldset .field + .check {
    margin-top: 4px;
}

.check:has(:disabled) {
    color: #98989b;
}

.check input {
    display: grid;
    place-items: center;
    width: 15px;
    height: 15px;
    background: #fff;
    border: 1px solid #98989b;
    appearance: none;
}

.check input:disabled {
    background: #efeff0;
}

.check input:checked::before {
    content: "✖";
    color: #c0c0c3;
    font-size: 12px;
    line-height: 13px;
}

.isosurfaces {
    margin-bottom: 12px;
    padding-bottom: 12px;
}

.values {
    display: flex;
    gap: 7px;
    margin-top: 8px;
}

.value-list {
    flex: 1;
    height: 292px;
    padding: 2px 5px;
    background: #fff;
    border: 1px solid #939397;
    border-radius: 2px;
}

.value-buttons {
    display: flex;
    flex-direction: column;
    gap: 7px;
}

.value-buttons .push {
    width: 90px;
}

.value-buttons .check {
    height: 22px;
}

.merge {
    margin-bottom: 8px;
}

.merge .combo {
    width: 205px;
}

.binning {
    padding: 5px 4px 12px;
}

.binning legend {
    margin-left: 4px;
}

.divisions {
    display: flex;
    align-items: center;
}

.divisions label {
    width: 82px;
}

.divisions .text-input {
    flex: 1;
}

.scrollbar {
    display: flex;
    flex-direction: column;
    width: 18px;
}

.scrollbar button {
    display: flex;
    align-items: center;
    justify-content: center;
    width: 18px;
    height: 18px;
    background: linear-gradient(90deg, #ececee, #d8d8db);
    border: 1px solid #8e8e92;
    border-radius: 2px;
}

.track {
    flex: 1;
    display: flex;
    padding: 18px 0 75px;
    background: #f6f6f7;
    border: 1px solid #d0d0d2;
    border-width: 0 1px;
}

.thumb {
    flex: 1;
    margin: 0 -1px;
    background: linear-gradient(90deg, #ececee, #cdcdd1);
    border: 1px solid #8e8e92;
    display: grid;
    place-items: center;
}

.thumb::before {
    content: "";
    width: 12px;
    height: 20px;
    background: radial-gradient(circle at 2px 2px, #b0b0b3 1px, transparent 1px) 0 0 / 4px 4px;
}

/* Render view */
.viewer {
    display: flex;
    flex-direction: column;
    min-width: 0;
}

.view-tools {
    display: flex;
    gap: 1px;
    align-items: flex-end;
    height: 25px;
    padding-left: 3px;
}

.view-tools button {
    display: flex;
    align-items: center;
    justify-content: center;
    width: 28px;
    height: 20px;
    background: linear-gradient(#ececee, #dcdcdf);
    border: 1px solid #98989b;
    border-radius: 3px 3px 0 0;
}

.render-view {
    flex: 1;
    position: relative;
    background: #fff;
    border: 3px solid #1010c8;
    border-right: none;
}

.scene {
    width: 100%;
}

.note {
    position: absolute;
    top: 105px;
    right: 90px;
    color: #f00;
    font-family: "Noto Sans CJK JP", sans-serif;
    font-size: 50px;
    font-feature-settings: "palt";
    line-height: 64px;
    white-space: nowrap;
}

.note span {
    font-family: Lato, sans-serif;
    font-size: 47px;
}

.statusbar {
    display: flex;
    justify-content: flex-end;
    height: 30px;
    padding-top: 2px;
}

.progress {
    width: 46.4%;
    height: 26px;
    border: 2px solid #98989b;
    border-right: none;
}

.progress button {
    display: flex;
    align-items: center;
    justify-content: center;
    width: 25px;
    height: 22px;
    background: #f4f4f5;
    border: 1px solid #98989b;
    border-radius: 2px;
}
```
